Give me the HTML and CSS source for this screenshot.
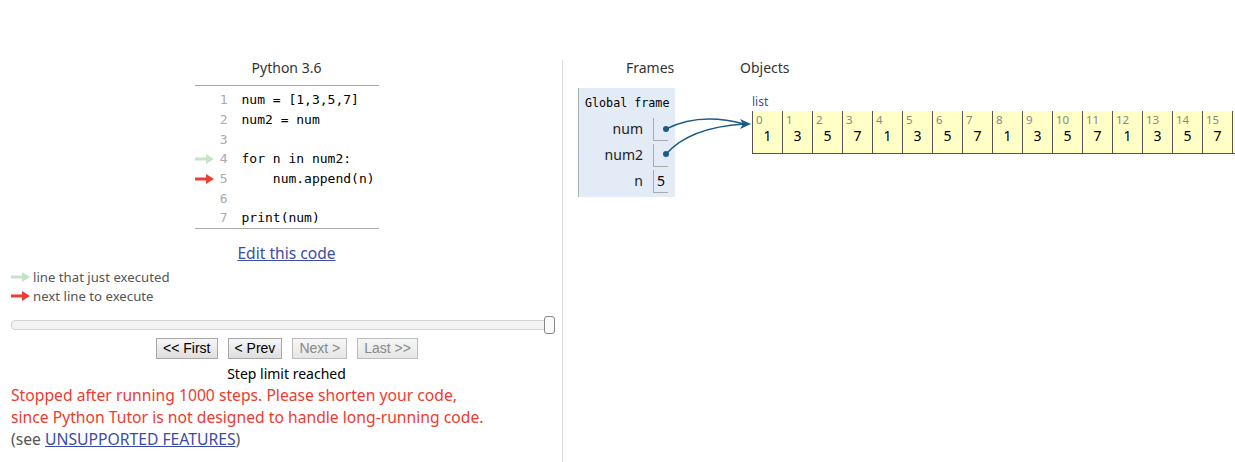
FILE: index.html
```html
<!DOCTYPE html>
<html>
<head>
<meta charset="utf-8">
<link rel="stylesheet" href="styles.css">
</head>
<body>
<div class="page">
  <div class="left">
    <div class="lang">Python 3.6</div>
    <div class="code">
      <div class="row"><span class="arr"></span><span class="ln">1</span><span class="src">num = [1,3,5,7]</span></div>
      <div class="row"><span class="arr"></span><span class="ln">2</span><span class="src">num2 = num</span></div>
      <div class="row"><span class="arr"></span><span class="ln">3</span><span class="src"></span></div>
      <div class="row"><span class="arr"><svg width="19" height="10" viewBox="0 0 19 10"><path d="M0 3.5h11V0l8 5-8 5V6.5H0z" fill="#c8e2c8"/></svg></span><span class="ln">4</span><span class="src">for n in num2:</span></div>
      <div class="row"><span class="arr"><svg width="19" height="10" viewBox="0 0 19 10"><path d="M0 3.5h11V0l8 5-8 5V6.5H0z" fill="#e93f34"/></svg></span><span class="ln">5</span><span class="src">    num.append(n)</span></div>
      <div class="row"><span class="arr"></span><span class="ln">6</span><span class="src"></span></div>
      <div class="row"><span class="arr"></span><span class="ln">7</span><span class="src">print(num)</span></div>
    </div>
    <div class="edit"><a href="#">Edit this code</a></div>
    <div class="legend">
      <div class="leg"><svg width="19" height="10" viewBox="0 0 19 10"><path d="M0 3.5h11V0l8 5-8 5V6.5H0z" fill="#c8e2c8"/></svg><span>line that just executed</span></div>
      <div class="leg"><svg width="19" height="10" viewBox="0 0 19 10"><path d="M0 3.5h11V0l8 5-8 5V6.5H0z" fill="#e93f34"/></svg><span>next line to execute</span></div>
    </div>
    <div class="slider"><div class="track"></div><div class="handle"></div></div>
    <div class="buttons">
      <button class="btn">&lt;&lt; First</button>
      <button class="btn">&lt; Prev</button>
      <button class="btn off">Next &gt;</button>
      <button class="btn off">Last &gt;&gt;</button>
    </div>
    <div class="status">Step limit reached</div>
    <div class="error">Stopped after running 1000 steps. Please shorten your code,<br>since Python Tutor is not designed to handle long-running code.</div>
    <div class="see">(see <a href="#">UNSUPPORTED FEATURES</a>)</div>
  </div>
  <div class="right">
    <div class="heads"><span class="h-frames">Frames</span><span class="h-objects">Objects</span></div>
    <div class="viz">
      <div class="frame">
        <div class="ftitle">Global frame</div>
        <div class="vars">
          <span class="vname">num</span><span class="vval"></span>
          <span class="vname">num2</span><span class="vval"></span>
          <span class="vname">n</span><span class="vval">5</span>
        </div>
      </div>
      <div class="objects">
        <div class="tlabel">list</div>
        <div class="list">
          <div class="cell"><span class="idx">0</span><span class="val">1</span></div>
          <div class="cell"><span class="idx">1</span><span class="val">3</span></div>
          <div class="cell"><span class="idx">2</span><span class="val">5</span></div>
          <div class="cell"><span class="idx">3</span><span class="val">7</span></div>
          <div class="cell"><span class="idx">4</span><span class="val">1</span></div>
          <div class="cell"><span class="idx">5</span><span class="val">3</span></div>
          <div class="cell"><span class="idx">6</span><span class="val">5</span></div>
          <div class="cell"><span class="idx">7</span><span class="val">7</span></div>
          <div class="cell"><span class="idx">8</span><span class="val">1</span></div>
          <div class="cell"><span class="idx">9</span><span class="val">3</span></div>
          <div class="cell"><span class="idx">10</span><span class="val">5</span></div>
          <div class="cell"><span class="idx">11</span><span class="val">7</span></div>
          <div class="cell"><span class="idx">12</span><span class="val">1</span></div>
          <div class="cell"><span class="idx">13</span><span class="val">3</span></div>
          <div class="cell"><span class="idx">14</span><span class="val">5</span></div>
          <div class="cell"><span class="idx">15</span><span class="val">7</span></div>
          <div class="cell"></div>
        </div>
      </div>
    </div>
    <svg class="arrows" width="672" height="150" viewBox="563 60 672 150">
      <circle cx="666" cy="129" r="3" fill="#1c5b86"/>
      <circle cx="666" cy="154" r="3" fill="#1c5b86"/>
      <path d="M666 129 C690 117 718 117 744 124" fill="none" stroke="#1c5b86" stroke-width="1.5"/>
      <path d="M666 154 C684 134 712 126 744 124" fill="none" stroke="#1c5b86" stroke-width="1.5"/>
      <path d="M751 124 L740 119 L743 124 L740 129 Z" fill="#1c5b86"/>
    </svg>
  </div>
</div>
</body>
</html>
```

FILE: styles.css
```css
html, body {
  margin: 0;
  padding: 0;
  overflow: hidden;
  background: #fff;
}
body {
  font-family: "Noto Sans", "Open Sans", sans-serif;
  color: #333;
  width: 1235px;
  height: 462px;
}
.page {
  display: flex;
  padding-top: 60px;
  height: 402px;
  overflow: hidden;
}
.left {
  width: 551px;
  padding-left: 11px;
  flex: none;
}
.lang {
  text-align: center;
  font-size: 14px;
  line-height: 15px;
  color: #333;
}
.code {
  width: 184px;
  margin: 10px auto 0;
  border-top: 1px solid #aaa;
  border-bottom: 1px solid #aaa;
  padding: 4px 0 0;
  font-family: "DejaVu Sans Mono", "Liberation Mono", monospace;
  font-size: 13px;
}
.row {
  display: flex;
  align-items: center;
  height: 19.7px;
  white-space: pre;
  color: #000;
}
.arr {
  width: 20px;
  display: flex;
  align-items: center;
}
.arr svg { display: block; }
.ln {
  width: 13px;
  text-align: right;
  color: #aaa;
  padding-right: 14px;
}
.edit {
  margin-top: 14px;
  text-align: center;
  font-size: 15.6px;
  line-height: 20px;
}
.edit a, .see a {
  color: #3b4ba8;
}
.legend {
  margin-top: 5px;
  font-size: 13.2px;
  color: #555;
}
.leg {
  display: flex;
  align-items: center;
  height: 19px;
}
.leg svg { display: block; margin-right: 3px; }
.slider {
  position: relative;
  margin-top: 10px;
  height: 18px;
  width: 544px;
}
.track {
  position: absolute;
  left: 0;
  right: 4px;
  top: 4px;
  height: 8px;
  border: 1px solid #d3d3d3;
  border-radius: 4px;
  background: #f3f3f3;
}
.handle {
  position: absolute;
  right: 0;
  top: 0;
  width: 9px;
  height: 16px;
  border: 1px solid #888;
  border-radius: 3px;
  background: #fafafa;
}
.buttons {
  display: flex;
  justify-content: center;
  gap: 10px;
  margin-top: 4px;
  padding-left: 1px;
}
.btn {
  font-family: "Liberation Sans", Arial, sans-serif;
  font-size: 14px;
  height: 21px;
  padding: 0 6px;
  border: 1px solid #a9a9a9;
  border-radius: 0;
  background: linear-gradient(#f6f6f6, #dedede);
  color: #000;
  line-height: 18px;
}
.btn.off {
  color: #888;
  border-color: #bdbdbd;
  background: linear-gradient(#f6f6f6, #e6e6e6);
}
.status {
  margin-top: 6px;
  text-align: center;
  font-size: 14px;
  line-height: 18px;
  color: #000;
}
.error {
  margin-top: 1px;
  color: #ee3b2f;
  font-size: 15.7px;
  line-height: 22px;
}
.see {
  font-size: 15.7px;
  line-height: 22px;
  color: #555;
}
.right {
  position: relative;
  flex: 1;
  border-left: 1px solid #ddd;
  padding-left: 15px;
}
.heads {
  display: flex;
  font-size: 14px;
  line-height: 19px;
  margin-top: -2px;
  color: #333;
}
.h-frames {
  width: 162px;
  padding-left: 48px;
  box-sizing: border-box;
}
.viz {
  display: flex;
  margin-top: 11px;
}
.frame {
  width: 96px;
  flex: none;
  background: #e2ebf6;
  border-left: 1px solid #a6b3b6;
  padding: 6px 0 4px;
  align-self: flex-start;
}
.ftitle {
  font-family: "DejaVu Sans Mono", "Liberation Mono", monospace;
  font-size: 11.7px;
  line-height: 18px;
  padding-left: 6px;
  color: #000;
}
.vars {
  margin-top: 6px;
  display: grid;
  grid-template-columns: 1fr 15px;
  column-gap: 10px;
  row-gap: 3px;
  padding-right: 7px;
}
.vname {
  text-align: right;
  font-size: 14px;
  line-height: 22px;
  color: #222;
}
.vval {
  height: 22px;
  border-left: 1px solid #aaa;
  border-bottom: 1px solid #aaa;
  font-size: 14px;
  line-height: 22px;
  padding-left: 3px;
  color: #000;
}
.objects {
  margin-left: 77px;
  padding-top: 7px;
}
.tlabel {
  font-size: 12px;
  line-height: 14px;
  color: #4c4a9e;
  margin-bottom: 2px;
}
.list {
  display: flex;
}
.cell {
  flex: none;
  width: 29px;
  height: 42px;
  background: #ffffc6;
  border-left: 1px solid #555;
  border-bottom: 1px solid #555;
  display: flex;
  flex-direction: column;
}
.idx {
  font-size: 11.5px;
  line-height: 14px;
  color: #888;
  padding: 2px 0 0 3px;
}
.val {
  font-size: 14px;
  line-height: 18px;
  text-align: center;
  color: #000;
}
.arrows {
  position: absolute;
  left: 0;
  top: 0;
}
```
